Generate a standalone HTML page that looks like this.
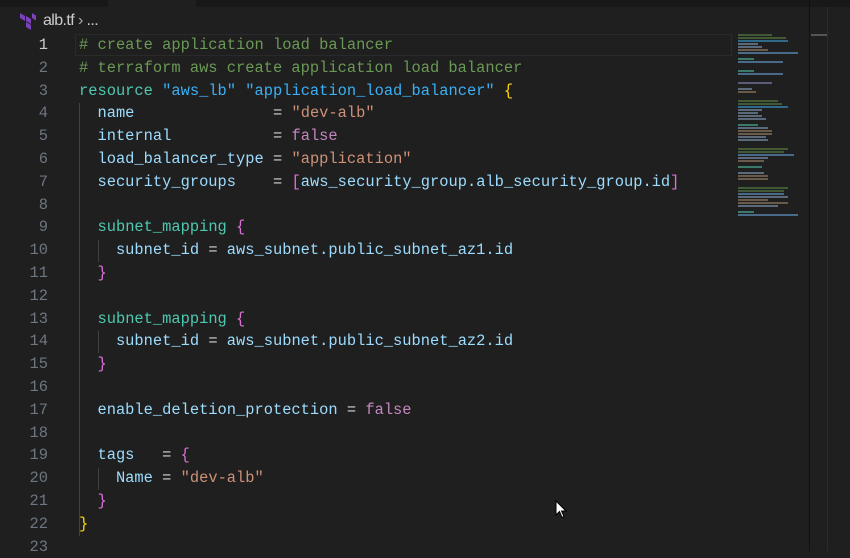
<!DOCTYPE html><html><head><meta charset="utf-8"><style>
body{margin:0;width:850px;height:551px;background:#1f1f1f;overflow:hidden;position:relative;font-family:"Liberation Mono",monospace}
.top{position:absolute;left:0;top:0;width:850px;height:7px;background:#181818}
.tab{position:absolute;left:108px;top:0;width:88px;height:7px;background:#1f1f1f}
.bc{position:absolute;left:43px;top:12px;font:16px "Liberation Sans",sans-serif;color:#ccc;letter-spacing:-0.6px}
.ln{position:absolute;left:0;width:48px;text-align:right;color:#6e7681;font-size:15.4px;line-height:22.8px}
.code{position:absolute;left:79px;font-size:15.4px;line-height:22.8px;white-space:pre;color:#9cdcfe}
.c{color:#6a9955}.k{color:#4ec9b0}.s{color:#ce9178}.f{color:#c586c0}.w{color:#d4d4d4}.y{color:#ffd700}.m{color:#da70d6}.l{color:#3ab0f5}
.cur{position:absolute;left:75px;top:34px;width:655px;height:20px;border:1px solid #2a2a2a}
.g{position:absolute;width:1px;background:#404040}
.sb{position:absolute;left:809px;top:0;width:1px;height:551px;background:#111}
.sb2{position:absolute;left:827px;top:7px;width:1px;height:544px;background:#2b2b2b}
.mm{position:absolute;left:738px;top:34px;width:60px}
.mm div{height:2px;margin-bottom:1px}
</style></head><body>
<div class="top"></div><div class="tab"></div>
<div class="sb"></div><div class="sb2"></div>
<div style="position:absolute;left:811px;top:34px;width:16px;height:2px;background:#555"></div>
<svg style="position:absolute;left:19px;top:12px" width="18" height="18" viewBox="0 0 18 18"><path d="M1 1l5 3v5L1 6z M7 4l5 3v5L7 9z M13 1l4 2.5v5L13 6z M7 10l5 3v5l-5-3z" fill="#7b42bc"/></svg>
<div class="bc">alb.tf <span style="color:#aaa">›</span> ...</div>
<div class="cur"></div>
<div class="g" style="left:79px;top:103px;height:433px"></div>
<div class="g" style="left:98px;top:240px;height:22px"></div>
<div class="g" style="left:98px;top:331px;height:22px"></div>
<div class="g" style="left:98px;top:468px;height:22px"></div>
<div class="ln" style="top:34px"><span style="color:#ccc">1</span><br>2<br>3<br>4<br>5<br>6<br>7<br>8<br>9<br>10<br>11<br>12<br>13<br>14<br>15<br>16<br>17<br>18<br>19<br>20<br>21<br>22<br>23</div>
<div class="code" style="top:34px"><span class="c"># create application load balancer</span>
<span class="c"># terraform aws create application load balancer</span>
<span class="k">resource</span> <span class="l">"aws_lb"</span> <span class="l">"application_load_balancer"</span> <span class="y">{</span>
  name               <span class="w">=</span> <span class="s">"dev-alb"</span>
  internal           <span class="w">=</span> <span class="f">false</span>
  load_balancer_type <span class="w">=</span> <span class="s">"application"</span>
  security_groups    <span class="w">=</span> <span class="m">[</span>aws_security_group.alb_security_group.id<span class="m">]</span>

  <span class="k">subnet_mapping</span> <span class="m">{</span>
    subnet_id <span class="w">=</span> aws_subnet.public_subnet_az1.id
  <span class="m">}</span>

  <span class="k">subnet_mapping</span> <span class="m">{</span>
    subnet_id <span class="w">=</span> aws_subnet.public_subnet_az2.id
  <span class="m">}</span>

  enable_deletion_protection <span class="w">=</span> <span class="f">false</span>

  tags   <span class="w">=</span> <span class="m">{</span>
    Name <span class="w">=</span> <span class="s">"dev-alb"</span>
  <span class="m">}</span>
<span class="y">}</span>
</div>
<div class="mm">
<div style="width:34px;background:#3f5a34"></div><div style="width:48px;background:#3f5a34"></div><div style="width:50px;background:#2f6a8a"></div><div style="width:20px;background:#5a6a7a"></div><div style="width:24px;background:#5a6a7a"></div><div style="width:30px;background:#6a5a4a"></div><div style="width:60px;background:#4a6a8a"></div><div></div><div style="width:16px;background:#3a7a6a"></div><div style="width:45px;background:#4a6a8a"></div><div></div><div></div><div style="width:16px;background:#3a7a6a"></div><div style="width:45px;background:#4a6a8a"></div><div></div><div></div><div style="width:34px;background:#5a5a7a"></div><div></div><div style="width:14px;background:#5a6a7a"></div><div style="width:18px;background:#6a5a4a"></div><div></div><div></div>
<div style="width:40px;background:#3f5a34"></div><div style="width:44px;background:#3f5a34"></div><div style="width:50px;background:#2f6a8a"></div><div style="width:24px;background:#5a6a7a"></div><div style="width:20px;background:#5a6a7a"></div><div style="width:24px;background:#5a6a7a"></div><div style="width:28px;background:#5a6a7a"></div><div></div><div style="width:20px;background:#3a7a6a"></div><div style="width:30px;background:#5a6a7a"></div><div style="width:34px;background:#6a5a4a"></div><div style="width:34px;background:#6a5a4a"></div><div style="width:28px;background:#5a6a7a"></div><div style="width:30px;background:#5a6a7a"></div><div></div><div></div>
<div style="width:50px;background:#3f5a34"></div><div style="width:46px;background:#3f5a34"></div><div style="width:56px;background:#4a6a8a"></div><div style="width:30px;background:#5a6a7a"></div><div style="width:26px;background:#6a5a4a"></div><div></div><div style="width:24px;background:#3a7a6a"></div><div></div><div style="width:26px;background:#5a6a7a"></div><div style="width:30px;background:#6a5a4a"></div><div style="width:30px;background:#6a5a4a"></div><div></div><div></div>
<div style="width:50px;background:#3f5a34"></div><div style="width:46px;background:#3f5a34"></div><div style="width:46px;background:#4a6a8a"></div><div style="width:50px;background:#5a6a7a"></div><div style="width:30px;background:#6a5a4a"></div><div style="width:50px;background:#6a5a4a"></div><div style="width:40px;background:#5a6a7a"></div><div></div><div style="width:16px;background:#3a7a6a"></div><div style="width:60px;background:#4a6a8a"></div>
</div>
<svg style="position:absolute;left:555px;top:500px" width="12" height="19" viewBox="0 0 12 19"><path d="M1 1v14l3.5-3.5 2.5 6 2-1-2.5-5.5H11z" fill="#fff" stroke="#000" stroke-width="1"/></svg>
</body></html>
